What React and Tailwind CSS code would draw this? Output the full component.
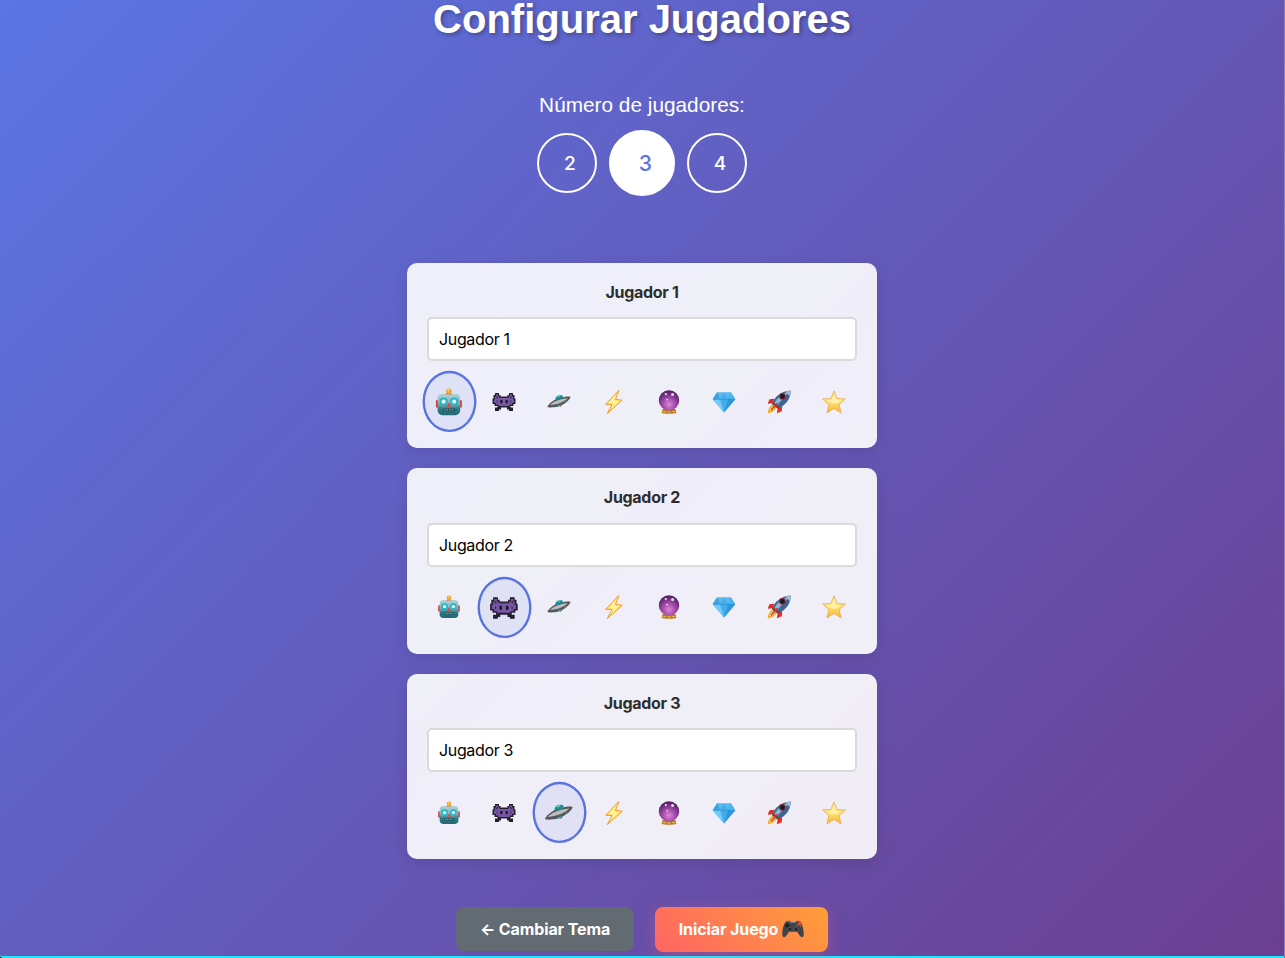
import { useState } from "react";

function Robot() {
  return (
    <>
      <path d="M1.2 10.5h3v6h-3zM19.8 10.5h3v6h-3z" fill="#d43d32" />
      <rect x="2.6" y="5" width="18.8" height="18" rx="4" fill="url(#robotFace)" />
      <path d="M9.4 5.600c.2-1.7 5-1.7 5.200 0z" fill="#c17a5a" />
      <circle cx="12" cy="2.900" r="2.3" fill="#efa62c" />
      <circle cx="11.6" cy="2.2" r=".9" fill="#ffd87a" />
      <circle cx="7.6" cy="11.600" r="3.4" fill="#28b5c9" />
      <circle cx="16.4" cy="11.600" r="3.4" fill="#28b5c9" />
      <circle cx="7.6" cy="11.600" r="1.7" fill="#e9ffff" />
      <circle cx="16.4" cy="11.600" r="1.7" fill="#e9ffff" />
      <path d="M12 12.2l2 3.600h-4z" fill="#e2473c" />
      <rect x="7" y="17.4" width="10" height="2.2" rx=".8" fill="#244b52" />
      <path d="M8 18.5h8.2" stroke="#a9c5c6" strokeWidth=".8" strokeDasharray="1.2 .9" />
    </>
  );
}

function Invader() {
  return (
    <>
      <path
        d="M3 3h4v2h1.500v1.500h7V5H17V3h4v2h1.500v3.500H23.500V14H21.500v2H18.500v1.500H21V21h-4v-1.500h-2V17.500H9v2H7V21H3v-3.500h2.500V16H2.500V14H.5V8.500h1V5H3z"
        fill="#25202e"
      />
      <path
        d="M4 4.500h2.200v2H7.500V8h9V6.500h1.300v-2H20v2h1V9.500h1V12.800h-2v1.800h-2.500V16h-11v-1.400H4V12.800H2V9.500h1v-3h1z"
        fill="#7857a6"
      />
      <path d="M4.300 6.200h1.500v2.300H4.300zM18.200 6.200h1.500v2.300h-1.500zM4.600 10.200h1v2.600h-1zM18.400 10.200h1v2.600h-1z" fill="#41325c" />
      <path d="M8.300 10h2v3.300h-2zM13.700 10h2v3.300h-2z" fill="#17141f" />
    </>
  );
}

function Saucer() {
  return (
    <>
      <path d="M.4 16.8C2.5 12.8 7.5 9.2 14 7.6c4.6-1.1 8.8-1.5 9.4-.6.4 1.7-5.9 7.6-12 9.6-4.7 1-10.3 1.4-11 .2z" fill="#55575a" />
      <path d="M2.8 15.1c3.4-3.5 8.7-6.2 17.8-6.9-3.1 3.6-9.1 6.3-17.8 6.9z" fill="url(#metal)" />
      <path d="M8.4 9.6C8.2 6.5 11 4.6 14.8 5.3c1.4.4 1.5 1.5.5 2.4-1.6 1.6-4.8 2.6-6.9 1.9z" fill="#178f92" />
      <path d="M10.4 7.2c.7-.9 1.7-1.2 2.8-1.1" stroke="#7be5df" strokeWidth="1" fill="none" />
      <path d="M11 16.3l3.2-1.2M18 12.6l1.2-.9" stroke="#26bbb0" strokeWidth="1.2" />
      <path d="M13.1 16.3l1.7-.8" stroke="#b3483f" strokeWidth="1" />
    </>
  );
}

function Bolt() {
  return (
    <>
      <path d="M16.8.5L3.7 14.3l6.3.2-4.7 9 14.9-13.3-6.7-.8z" fill="#ffe36a" stroke="#f59a2b" strokeWidth="1" strokeLinejoin="round" />
      <path d="M15 3.6l-8.7 9.1h5.1l-3 6.3 9-8.1-5.4-.4z" fill="#fff3a2" />
    </>
  );
}

function Orb() {
  return (
    <>
      <path d="M5.6 19h12.8l1 4c-2.5 1-12.300 1-14.800 0z" fill="#b77a22" />
      <path d="M5.8 21.6h3M10.4 22h3.2M15.2 21.6h3" stroke="#f0c05b" strokeWidth="1" />
      <circle cx="12" cy="10.4" r="10.2" fill="url(#orb)" />
      <circle cx="8.8" cy="4.1" r="1.1" fill="#f4d7f5" />
      <circle cx="15.6" cy="4.5" r="1.6" fill="#ead0ee" />
      <circle cx="10.1" cy="9.6" r=".9" fill="#f8d7f4" />
    </>
  );
}

function Gem() {
  return (
    <>
      <path d="M5 2.500h14l4.300 6.700L12 22.500.7 9.200z" fill="#43adeb" />
      <path d="M5 2.500l3 6.200L12 3l4 5.700 3-6.200z" fill="#5cb9ee" />
      <path d="M.7 9.200L5 2.500l3 6.200z" fill="#3ba2df" />
      <path d="M23.300 9.200L19 2.500l-3 6.200z" fill="#4bb4ed" />
      <path d="M8 9l4 13.500L.7 9.200z" fill="#72cbfb" />
      <path d="M16 9l-4 13.500L23.300 9.200z" fill="#2f98dd" />
      <path d="M1.500 9.300c5.200.6 15.800.6 21 0" stroke="#2c8fc9" strokeWidth=".7" fill="none" />
    </>
  );
}

function Rocket() {
  return (
    <>
      <path d="M7.200 8.800L2.500 9.200.7 13.800l5-.6zM15.200 16.200l-.4 5-5 2 1-5.200z" fill="#e8291f" />
      <path d="M5.800 14.400c-3.200 1.600-4.900 5-5.200 9.100 4.100-.7 7.600-2.800 9.300-5.800z" fill="#f6ae2d" />
      <path d="M6.200 16.500c-2 1.200-3 2.700-3.300 4.700 2-.4 3.800-1.600 4.800-3.300z" fill="#fff08b" />
      <path d="M4.800 14.300C7.800 6.500 14 1.300 23.800.6c-.2 9-5.300 14.900-13.200 18.100z" fill="#3f6594" />
      <path d="M7.300 13.200C10.600 7.500 15.100 3.600 22 1.700L10.500 14.800z" fill="#8fb8d4" />
      <path d="M18.400 1.700l4.200 4.400 1.200-5.500z" fill="#a9bccb" />
      <path d="M6 13l6.200 4.800" stroke="#993231" strokeWidth="1.600" />
      <circle cx="15.400" cy="6.400" r="3.300" fill="#992a2d" />
      <circle cx="15.400" cy="6.400" r="2.300" fill="#141c2a" />
      <path d="M4.500 19.800l5.700-6.300" stroke="#d33a25" strokeWidth="1.600" strokeLinecap="round" />
    </>
  );
}

function Star() {
  return (
    <>
      <path
        d="M12 .9l3.1 7.6 8.3.5-6.3 5.5 2 8.4-7.1-4.5-7.1 4.5 2-8.4L.6 9l8.3-.5z"
        fill="url(#star)"
        stroke="#e9aa4b"
        strokeWidth=".8"
        strokeLinejoin="round"
      />
      <path d="M12 4l2.1 5.8 5.2.3-4.5 3.300-5.600.1-4.500-3.400 5.200-.3z" fill="#fff5ba" opacity=".75" />
    </>
  );
}

const avatars = [
  ["Robot", Robot],
  ["Invader", Invader],
  ["Saucer", Saucer],
  ["Bolt", Bolt],
  ["Orb", Orb],
  ["Gem", Gem],
  ["Rocket", Rocket],
  ["Star", Star],
];

function Gradients() {
  return (
    <svg width="0" height="0" className="absolute" aria-hidden="true">
      <defs>
        <linearGradient id="robotFace" x2="0" y2="1">
          <stop stopColor="#b4d2d6" />
          <stop offset=".45" stopColor="#7fb3ba" />
          <stop offset=".7" stopColor="#2c7a86" />
          <stop offset="1" stopColor="#1f6873" />
        </linearGradient>
        <linearGradient id="metal" x2="1" y2="1">
          <stop stopColor="#606366" />
          <stop offset=".5" stopColor="#c1c3c4" />
          <stop offset="1" stopColor="#626466" />
        </linearGradient>
        <radialGradient id="orb" cx=".5" cy=".7" r=".7">
          <stop stopColor="#dc86d8" />
          <stop offset=".45" stopColor="#a14aaa" />
          <stop offset="1" stopColor="#471b55" />
        </radialGradient>
        <linearGradient id="star" x2="0" y2="1">
          <stop stopColor="#ffe8a0" />
          <stop offset=".5" stopColor="#ffe170" />
          <stop offset="1" stopColor="#f7b52f" />
        </linearGradient>
      </defs>
    </svg>
  );
}

function Gamepad() {
  return (
    <svg viewBox="0 0 22 18" className="h-[18px] w-[22px] shrink-0" aria-hidden="true">
      <path d="M4 1.3c2-1 4-.6 4.8.7h4.4c.8-1.3 2.8-1.7 4.8-.7 2.2 2.2 4.2 9.8 3.6 14.2-.4 2-2.3 2.2-3.6.5l-3-4.2H7l-3 4.2c-1.3 1.7-3.2 1.5-3.6-.5C-.2 11.1 1.8 3.5 4 1.3z" fill="#3f4347" />
      <path d="M4.5 1.7c1.5-.6 3-.3 4 .9h5c1-1.2 2.5-1.5 4-.9" stroke="#74797a" fill="none" />
      <path d="M5.4 3.4v4M3.4 5.4h4" stroke="#171a1c" strokeWidth="1.5" />
      <circle cx="8" cy="9.3" r="2" fill="#202326" stroke="#686c6d" strokeWidth=".6" />
      <circle cx="14" cy="9.3" r="2" fill="#202326" stroke="#686c6d" strokeWidth=".6" />
      <circle cx="17.4" cy="3.8" r="1.7" fill="#f04b2d" />
      <circle cx="15" cy="5.5" r=".8" fill="#5e8d6e" />
      <circle cx="18.8" cy="6.2" r=".8" fill="#887b54" />
    </svg>
  );
}

function PlayerCard({ number }) {
  const [selected, setSelected] = useState(number - 1);
  const [name, setName] = useState(`Jugador ${number}`);
  return (
    <section className="h-[185.4px] w-[470px] rounded-[10px] bg-white/90 px-5 pt-5 shadow-[0_4px_15px_rgba(0,0,0,0.1)]">
      <h2 className="h-[34.5px] text-center text-base leading-[19px] font-bold tracking-[-0.3px] text-[#2d2d2d]">
        Jugador {number}
      </h2>
      <input
        value={name}
        onChange={(e) => setName(e.target.value)}
        className="block h-11 w-full rounded-[5px] border-2 border-[#dadada] bg-white px-2.5 text-base tracking-[-0.35px] text-black outline-none"
      />
      <div className="mt-[15px] grid grid-cols-8 gap-2.5">
        {avatars.map(([label, Icon], i) => (
          <button
            key={label}
            aria-label={label}
            onClick={() => setSelected(i)}
            className={
              i === selected
                ? "flex h-[51.3px] scale-120 items-center justify-center rounded-[50%] border-2 border-[#5a73e2] bg-[#5a73e2]/10"
                : "flex h-[51.3px] items-center justify-center rounded-[50%] border-2 border-transparent"
            }
          >
            <svg viewBox="0 0 24 24" className="mr-px h-6 w-6 shrink-0">
              <Icon />
            </svg>
          </button>
        ))}
      </div>
    </section>
  );
}

export default function App() {
  const [count, setCount] = useState(3);
  return (
    <div className="h-[958px] overflow-hidden bg-black font-['Inter',sans-serif]">
      <Gradients />
      <div className="h-full rounded-bl-[3px] border-r border-b-2 border-r-[#8d80b8] border-b-[#18eaff] bg-[linear-gradient(135deg,#5b75e3_0%,#6b3f91_100%)]">
        <main className="flex flex-col items-center">
          <h1 className="h-[43px] font-['Liberation_Sans',sans-serif] text-[40px] leading-[38px] font-bold text-white [text-shadow:2px_2px_4px_rgba(0,0,0,0.3)]">
            Configurar Jugadores
          </h1>
          <p className="mt-[50px] h-6 font-['Liberation_Sans',sans-serif] text-[20.8px] leading-6 text-white">Número de jugadores:</p>
          <div className="mt-4 flex gap-[15px]">
            {[2, 3, 4].map((n) => (
              <button
                key={n}
                onClick={() => setCount(n)}
                className={
                  n === count
                    ? "flex size-[60px] scale-110 items-center justify-center rounded-full border-2 border-white bg-white pl-1.5 text-[19.2px] font-medium text-[#5a73e2]"
                    : "flex size-[60px] items-center justify-center rounded-full border-2 border-white pl-1.5 text-[19.2px] font-medium text-white"
                }
              >
                {n}
              </button>
            ))}
          </div>
          <div className="mt-[69.8px] flex flex-col gap-5">
            {[1, 2, 3].slice(0, Math.max(count, 2)).map((n) => (
              <PlayerCard key={n} number={n} />
            ))}
          </div>
          <div className="mt-12 flex items-start gap-[21px] text-base font-bold tracking-[-0.1px] text-white">
            <button className="h-11 w-[178px] rounded-lg bg-[#636b72]">← Cambiar Tema</button>
            <button className="flex h-[45px] w-[173px] items-center justify-center gap-1 rounded-lg bg-[linear-gradient(45deg,#ff6464,#ff9f38)] whitespace-nowrap shadow-[0_4px_15px_rgba(255,107,107,0.3)]">
              Iniciar Juego
              <Gamepad />
            </button>
          </div>
        </main>
      </div>
    </div>
  );
}
